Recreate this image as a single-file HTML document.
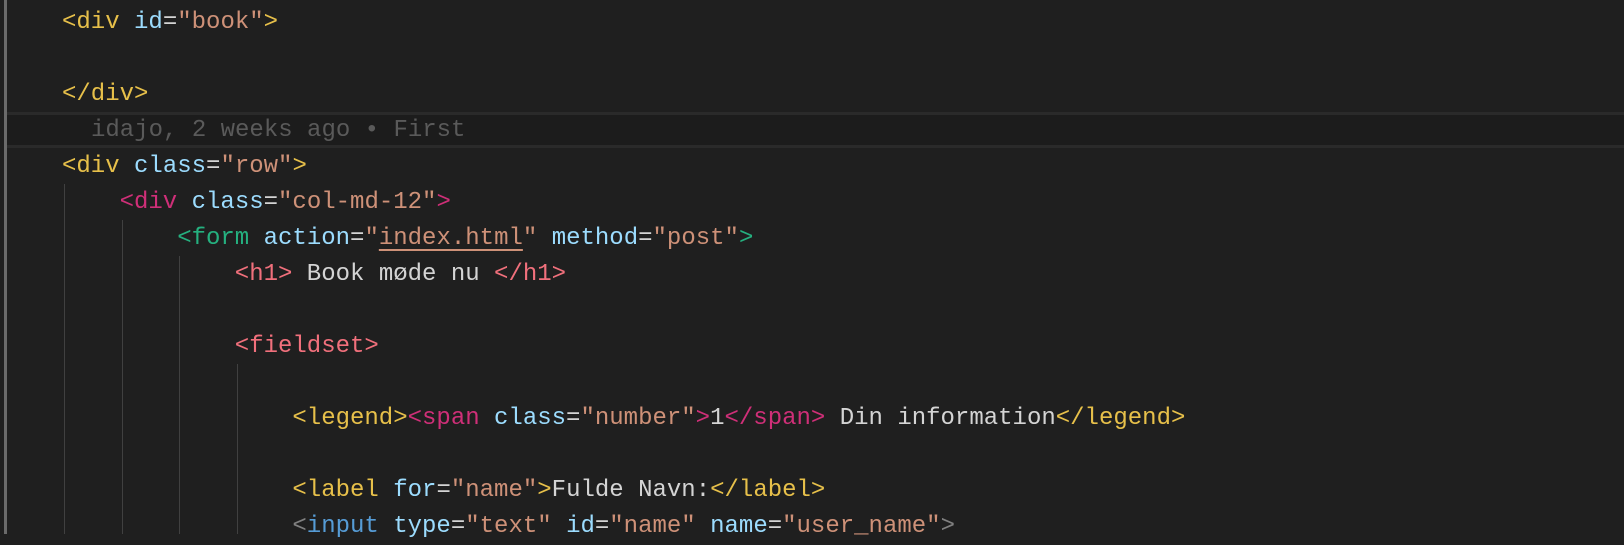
<!DOCTYPE html>
<html><head><meta charset="utf-8"><style>
html,body{margin:0;padding:0;background:#1f1f1f;width:1624px;height:534px;overflow:hidden}
.l{position:absolute;left:62px;height:36px;line-height:36px;font-family:"Liberation Mono",monospace;font-size:24px;white-space:pre;color:#d4d4d4}
.y{color:#e7c04a}.p{color:#cf2f78}.g{color:#25b07f}.r{color:#f1707c}.a{color:#9cdcfe}.s{color:#ce9178}.gr{color:#808080}.b{color:#569cd6}
.guide{position:absolute;width:1px;background:#404040}
</style></head><body>
<div style="position:absolute;left:4px;top:0;width:3px;height:534px;background:#6a6a6a"></div>
<div style="position:absolute;left:7px;top:112px;width:1617px;height:3px;background:#2a2a2a"></div>
<div style="position:absolute;left:7px;top:115px;width:1617px;height:30px;background:#1c1c1c"></div>
<div style="position:absolute;left:7px;top:145px;width:1617px;height:3px;background:#2a2a2a"></div>
<div class="guide" style="left:64px;top:184px;height:350px"></div>
<div class="guide" style="left:122px;top:220px;height:314px"></div>
<div class="guide" style="left:179px;top:256px;height:278px"></div>
<div class="guide" style="left:237px;top:364px;height:170px"></div>

<div class="l" style="top:4.5px"><span class="y">&lt;div</span> <span class="a">id</span>=<span class="s">"book"</span><span class="y">&gt;</span></div>
<div class="l" style="top:76.5px"><span class="y">&lt;/div&gt;</span></div>
<div class="l" style="top:112.5px;left:91px;color:#5a5a5a">idajo, 2 weeks ago • First</div>
<div class="l" style="top:148.5px"><span class="y">&lt;div</span> <span class="a">class</span>=<span class="s">"row"</span><span class="y">&gt;</span></div>
<div class="l" style="top:184.5px;left:119.6px"><span class="p">&lt;div</span> <span class="a">class</span>=<span class="s">"col-md-12"</span><span class="p">&gt;</span></div>
<div class="l" style="top:220.5px;left:177.2px"><span class="g">&lt;form</span> <span class="a">action</span>=<span class="s">"<span style="text-decoration:underline;text-underline-offset:5px">index.html</span>"</span> <span class="a">method</span>=<span class="s">"post"</span><span class="g">&gt;</span></div>
<div class="l" style="top:256.5px;left:234.8px"><span class="r">&lt;h1&gt;</span> Book møde nu <span class="r">&lt;/h1&gt;</span></div>
<div class="l" style="top:328.5px;left:234.8px"><span class="r">&lt;fieldset&gt;</span></div>
<div class="l" style="top:400.5px;left:292.4px"><span class="y">&lt;legend&gt;</span><span class="p">&lt;span</span> <span class="a">class</span>=<span class="s">"number"</span><span class="p">&gt;</span>1<span class="p">&lt;/span&gt;</span> Din information<span class="y">&lt;/legend&gt;</span></div>
<div class="l" style="top:472.5px;left:292.4px"><span class="y">&lt;label</span> <span class="a">for</span>=<span class="s">"name"</span><span class="y">&gt;</span>Fulde Navn:<span class="y">&lt;/label&gt;</span></div>
<div class="l" style="top:508.5px;left:292.4px"><span class="gr">&lt;</span><span class="b">input</span> <span class="a">type</span>=<span class="s">"text"</span> <span class="a">id</span>=<span class="s">"name"</span> <span class="a">name</span>=<span class="s">"user_name"</span><span class="gr">&gt;</span></div>
</body></html>
